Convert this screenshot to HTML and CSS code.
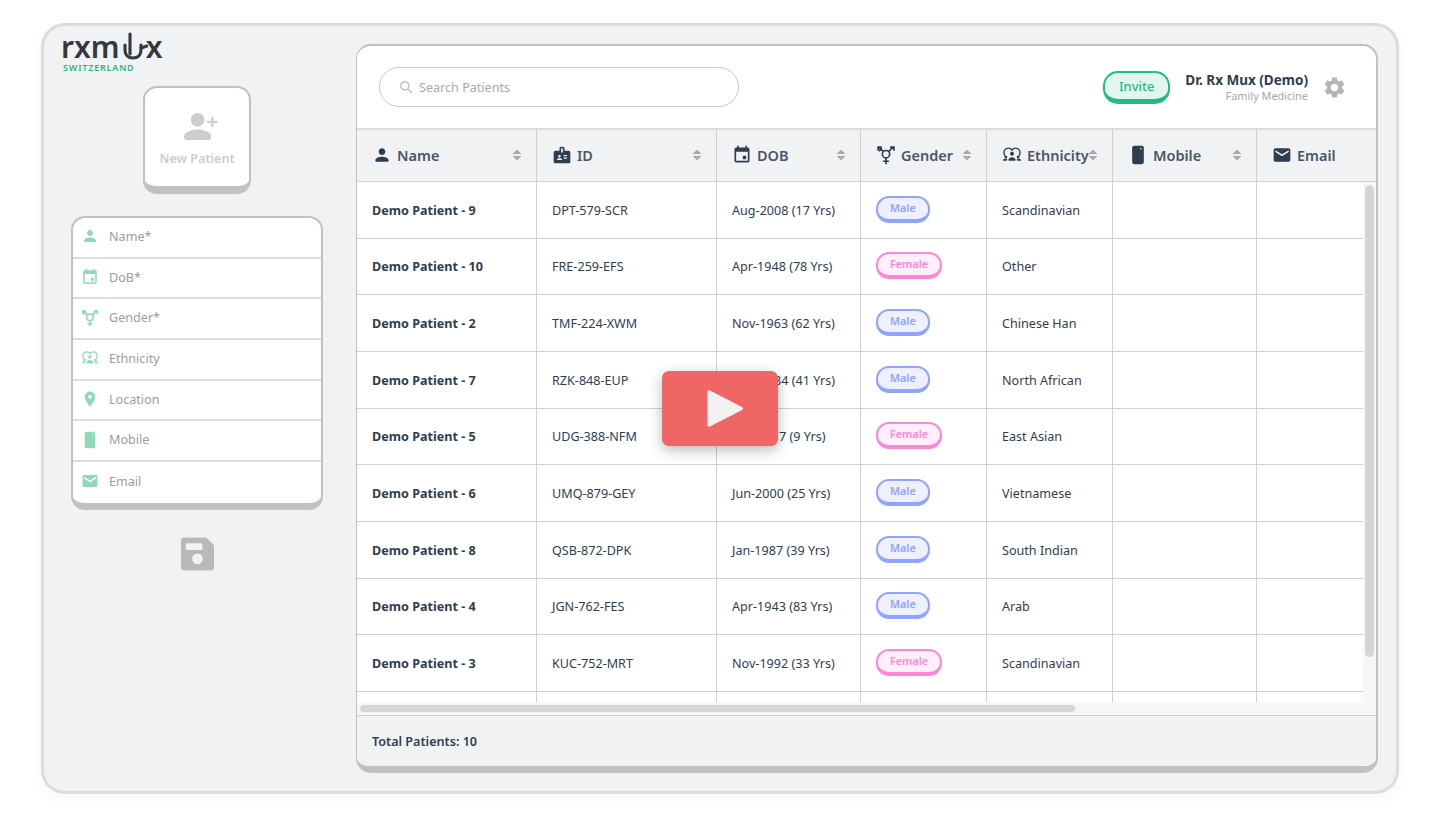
FILE: index.html
```html
<!DOCTYPE html>
<html lang="en">
<head>
  <meta charset="UTF-8">
  <meta name="viewport" content="width=device-width, initial-scale=1.0">
  <title>rxmux patients</title>
  <link rel="stylesheet" href="styles.css">
</head>
<body>
  <svg class="icon-defs" xmlns="http://www.w3.org/2000/svg">
    <symbol id="i-person" viewBox="0 0 24 24"><path d="M12 12c2.210 0 4-1.790 4-4s-1.790-4-4-4-4 1.790-4 4 1.790 4 4 4zm0 2c-2.670 0-8 1.340-8 4v1c0 .6.4 1 1 1h14c.6 0 1-.4 1-1v-1c0-2.660-5.330-4-8-4z"/></symbol>
    <symbol id="i-badge" viewBox="0 0 24 24"><path d="M20 7h-5V4c0-1.100-.9-2-2-2h-2c-1.100 0-2 .9-2 2v3H4c-1.100 0-2 .9-2 2v11c0 1.100.9 2 2 2h16c1.100 0 2-.9 2-2V9c0-1.100-.9-2-2-2zM9 12c.83 0 1.500.67 1.500 1.500S9.830 15 9 15s-1.500-.67-1.500-1.500S8.170 12 9 12zm3 6H6v-.75c0-1 2-1.500 3-1.500s3 .5 3 1.500V18zm1-9h-2V4h2v5zm5 7.500h-4V15h4v1.500zm0-3h-4V12h4v1.500z"/></symbol>
    <symbol id="i-event" viewBox="0 0 24 24"><path d="M17 13h-4v4h4v-4zM16 1v2H8V1H6v2H5c-1.110 0-1.990.9-1.990 2L3 19c0 1.100.89 2 2 2h14c1.100 0 2-.9 2-2V5c0-1.100-.9-2-2-2h-1V1h-2zm3 18H5V8h14v11z"/></symbol>
    <symbol id="i-gender" viewBox="0 0 24 24">
      <g fill="none" stroke="currentColor" stroke-width="2">
        <circle cx="12" cy="11" r="4.400"/>
        <path d="M12 15.400V23M8.500 19.500h7M8.800 7.800 3.500 2.500M15.200 7.800l5.300-5.300M2.500 7V2.500H7M17 2.500h4.500V7M3.500 7.500 7 4"/>
      </g>
    </symbol>
    <symbol id="i-ethnicity" viewBox="0 0 24 24">
      <path fill="none" stroke="currentColor" stroke-width="1.600" d="M3.600 13C.6 8 3.500 3.800 7.500 3.800c2 0 3.600 1 4.500 2.400.9-1.400 2.500-2.400 4.500-2.400 4 0 6.900 4.200 3.900 9.200"/>
      <circle cx="12" cy="10.500" r="2.300"/>
      <path d="M7.800 19v-1.500c0-1.800 2.200-2.900 4.200-2.900s4.200 1.100 4.200 2.900V19z"/>
      <circle cx="4.600" cy="14.500" r="1.700"/>
      <circle cx="19.400" cy="14.500" r="1.700"/>
      <path d="M1 19v-.6c0-1 1.500-1.800 3.500-1.800.8 0 1.400.1 1.900.3-.3.400-.5.900-.5 1.500v.6zM23 19v-.6c0-1-1.500-1.800-3.500-1.800-.8 0-1.400.1-1.900.3.300.400.500.900.500 1.500v.6z"/>
    </symbol>
    <symbol id="i-pin" viewBox="0 0 24 24"><path d="M12 2C8.130 2 5 5.130 5 9c0 5.250 7 13 7 13s7-7.750 7-13c0-3.870-3.130-7-7-7zm0 9.500c-1.380 0-2.500-1.120-2.500-2.500s1.120-2.500 2.500-2.500 2.500 1.120 2.500 2.500-1.120 2.500-2.500 2.500z"/></symbol>
    <symbol id="i-mobile" viewBox="0 0 24 24"><path fill-rule="evenodd" d="M7.500 1h9c1.400 0 2.500 1.100 2.500 2.500v17c0 1.400-1.100 2.500-2.500 2.500h-9C6.100 23 5 21.900 5 20.500v-17C5 2.100 6.100 1 7.500 1zM15.500 3.500a1 1 0 1 0 0 2 1 1 0 0 0 0-2z"/></symbol>
    <symbol id="i-mail" viewBox="0 0 24 24"><path d="M20 4H4c-1.100 0-2 .9-2 2v12c0 1.100.9 2 2 2h16c1.100 0 2-.9 2-2V6c0-1.100-.9-2-2-2zm0 4.500-8 5-8-5V6.200l8 5 8-5z"/></symbol>
    <symbol id="i-gear" viewBox="0 0 24 24"><path d="M19.140 12.940c.04-.3.06-.61.06-.94 0-.32-.02-.64-.07-.94l2.030-1.580c.18-.14.23-.41.12-.61l-1.920-3.320c-.12-.22-.37-.29-.59-.22l-2.390.96c-.5-.38-1.030-.7-1.620-.94l-.36-2.540c-.04-.24-.24-.41-.48-.41h-3.840c-.24 0-.43.17-.47.41l-.36 2.540c-.59.24-1.130.57-1.620.94l-2.390-.96c-.22-.08-.47 0-.59.22L2.740 8.870c-.12.21-.08.47.12.61l2.030 1.580c-.05.3-.09.63-.09.94s.02.64.07.94l-2.030 1.580c-.18.14-.23.41-.12.61l1.920 3.320c.12.22.37.29.59.22l2.390-.96c.5.38 1.030.7 1.620.94l.36 2.540c.05.24.24.41.48.41h3.840c.24 0 .44-.17.47-.41l.36-2.540c.59-.24 1.130-.56 1.620-.94l2.390.96c.22.08.47 0 .59-.22l1.920-3.320c.12-.22.07-.47-.12-.61l-2.010-1.580zM12 15.600c-1.980 0-3.600-1.620-3.600-3.600s1.620-3.600 3.600-3.600 3.600 1.620 3.600 3.600-1.620 3.600-3.600 3.600z"/></symbol>
  </svg>

  <div class="frame">
    <aside class="sidebar">
      <div class="logo">
        <div class="logo-word">
          <span>rxm</span>
          <svg class="logo-u" viewBox="0 0 28 30" stroke="currentColor" stroke-width="3.100" stroke-linecap="round">
            <path d="M5 13v5c0 5 3 8 8 8s8-3 8-8v-5"/>
            <path d="M10 2v20"/>
            <path d="M21 16l6-2"/>
          </svg>
          <span class="logo-x">x</span>
        </div>
        <div class="logo-sub">SWITZERLAND</div>
      </div>

      <button class="new-patient">
        <svg class="new-patient-icon" viewBox="0 0 36 30"><path d="M15 15c3.900 0 7-3.100 7-7s-3.100-7-7-7-7 3.100-7 7 3.100 7 7 7zm0 3c-5 0-14 2.500-14 7v1c0 1.700 1.300 3 3 3h22c1.700 0 3-1.300 3-3v-1c0-4.500-9-7-14-7zM29 9V5h2.500v4h4v2.500h-4v4H29v-4h-4V9z"/></svg>
        <span>New Patient</span>
      </button>

      <div class="form-card">
        <div class="field"><svg class="field-icon"><use href="#i-person"/></svg>Name*</div>
        <div class="field"><svg class="field-icon"><use href="#i-event"/></svg>DoB*</div>
        <div class="field"><svg class="field-icon"><use href="#i-gender"/></svg>Gender*</div>
        <div class="field"><svg class="field-icon"><use href="#i-ethnicity"/></svg>Ethnicity</div>
        <div class="field"><svg class="field-icon"><use href="#i-pin"/></svg>Location</div>
        <div class="field"><svg class="field-icon"><use href="#i-mobile"/></svg>Mobile</div>
        <div class="field"><svg class="field-icon"><use href="#i-mail"/></svg>Email</div>
      </div>

      <svg class="save-icon" viewBox="0 0 34 34"><path fill-rule="evenodd" d="M3 0h22c.6 0 1.100.2 1.500.6l6.900 6.900c.4.4.6.9.6 1.500v22c0 1.700-1.300 3-3 3H3c-1.700 0-3-1.300-3-3V3C0 1.300 1.300 0 3 0zm2 7v5c0 .6.400 1 1 1h15c.6 0 1-.4 1-1V7c0-.6-.4-1-1-1H6c-.6 0-1 .4-1 1zm12 9.500a5.500 5.500 0 1 0 0 11 5.500 5.500 0 0 0 0-11z"/></svg>
    </aside>

    <main class="panel">
      <header class="topbar">
        <div class="search">
          <svg class="search-icon" viewBox="0 0 24 24" stroke="currentColor" stroke-width="1.800"><circle cx="10" cy="10" r="7"/><path d="m15 15 7 7"/></svg>
          Search Patients
        </div>
        <div class="topbar-right">
          <button class="invite">Invite</button>
          <div class="doctor">
            <div class="doctor-name">Dr. Rx Mux (Demo)</div>
            <div class="doctor-spec">Family Medicine</div>
          </div>
          <svg class="gear"><use href="#i-gear"/></svg>
        </div>
      </header>

      <div class="table-head row">
        <div class="th"><svg class="th-icon"><use href="#i-person"/></svg>Name<span class="sort"></span></div>
        <div class="th"><svg class="th-icon"><use href="#i-badge"/></svg>ID<span class="sort"></span></div>
        <div class="th"><svg class="th-icon"><use href="#i-event"/></svg>DOB<span class="sort"></span></div>
        <div class="th"><svg class="th-icon"><use href="#i-gender"/></svg>Gender<span class="sort"></span></div>
        <div class="th"><svg class="th-icon"><use href="#i-ethnicity"/></svg>Ethnicity<span class="sort"></span></div>
        <div class="th"><svg class="th-icon"><use href="#i-mobile"/></svg>Mobile<span class="sort"></span></div>
        <div class="th"><svg class="th-icon"><use href="#i-mail"/></svg>Email<span class="sort"></span></div>
      </div>

      <div class="table-scroll">
        <div class="table-body">
          <div class="row"><div class="td name">Demo Patient - 9</div><div class="td">DPT-579-SCR</div><div class="td">Aug-2008 (17 Yrs)</div><div class="td"><span class="pill male">Male</span></div><div class="td">Scandinavian</div><div class="td"></div><div class="td"></div></div>
          <div class="row"><div class="td name">Demo Patient - 10</div><div class="td">FRE-259-EFS</div><div class="td">Apr-1948 (78 Yrs)</div><div class="td"><span class="pill female">Female</span></div><div class="td">Other</div><div class="td"></div><div class="td"></div></div>
          <div class="row"><div class="td name">Demo Patient - 2</div><div class="td">TMF-224-XWM</div><div class="td">Nov-1963 (62 Yrs)</div><div class="td"><span class="pill male">Male</span></div><div class="td">Chinese Han</div><div class="td"></div><div class="td"></div></div>
          <div class="row"><div class="td name">Demo Patient - 7</div><div class="td">RZK-848-EUP</div><div class="td">Aug-1984 (41 Yrs)</div><div class="td"><span class="pill male">Male</span></div><div class="td">North African</div><div class="td"></div><div class="td"></div></div>
          <div class="row"><div class="td name">Demo Patient - 5</div><div class="td">UDG-388-NFM</div><div class="td">Feb-2017 (9 Yrs)</div><div class="td"><span class="pill female">Female</span></div><div class="td">East Asian</div><div class="td"></div><div class="td"></div></div>
          <div class="row"><div class="td name">Demo Patient - 6</div><div class="td">UMQ-879-GEY</div><div class="td">Jun-2000 (25 Yrs)</div><div class="td"><span class="pill male">Male</span></div><div class="td">Vietnamese</div><div class="td"></div><div class="td"></div></div>
          <div class="row"><div class="td name">Demo Patient - 8</div><div class="td">QSB-872-DPK</div><div class="td">Jan-1987 (39 Yrs)</div><div class="td"><span class="pill male">Male</span></div><div class="td">South Indian</div><div class="td"></div><div class="td"></div></div>
          <div class="row"><div class="td name">Demo Patient - 4</div><div class="td">JGN-762-FES</div><div class="td">Apr-1943 (83 Yrs)</div><div class="td"><span class="pill male">Male</span></div><div class="td">Arab</div><div class="td"></div><div class="td"></div></div>
          <div class="row"><div class="td name">Demo Patient - 3</div><div class="td">KUC-752-MRT</div><div class="td">Nov-1992 (33 Yrs)</div><div class="td"><span class="pill female">Female</span></div><div class="td">Scandinavian</div><div class="td"></div><div class="td"></div></div>
          <div class="row"><div class="td"></div><div class="td"></div><div class="td"></div><div class="td"></div><div class="td"></div><div class="td"></div><div class="td"></div></div>
        </div>
        <div class="vtrack"><div class="vthumb"></div></div>
        <div class="htrack"><div class="hthumb"></div></div>
      </div>

      <footer class="panel-foot">Total Patients: 10</footer>
    </main>
  </div>

  <div class="play">
    <svg class="play-arrow" viewBox="0 0 38 40"><path d="M3 1.500 36 18.500c1.300.7 1.300 2.300 0 3L3 38.500c-1.300.6-2.500 0-2.500-1.500V3C.5 1.500 1.700.9 3 1.500z"/></svg>
  </div>
</body>
</html>
```

FILE: styles.css
```css
:root {
  --cols: 180px 180px 144px 126px 126px 144px 144px;
  --line: #cfd0d2;
  --edge: #c0c1c3;
  --ink: #2f3d50;
  --grey-bg: #f1f2f4;
}

* {
  box-sizing: border-box;
}

html, body {
  margin: 0;
  height: 815px;
  overflow: hidden;
}

body {
  font-family: "Noto Sans", sans-serif;
  font-size: 12.6px;
  color: var(--ink);
  background-color: #fff;
  position: relative;
}

.icon-defs {
  display: none;
}

svg {
  fill: currentColor;
  flex: none;
}

button {
  font-family: inherit;
  cursor: pointer;
  padding: 0;
}

.frame {
  display: flex;
  height: 771px;
  margin: 23px 41px 0;
  padding: 18px 18px 18px 0;
  background-color: var(--grey-bg);
  border: 3px solid #dcdcdc;
  border-radius: 24px;
  box-shadow: 0 4px 14px rgba(0, 0, 0, 0.04);
}

/* left column */
.sidebar {
  width: 312px;
  padding-right: 6px;
  display: flex;
  flex-direction: column;
  align-items: center;
  flex: none;
}

.logo {
  align-self: flex-start;
  margin: -12px 0 0 17px;
}

.logo-word {
  display: flex;
  align-items: flex-end;
  height: 30px;
  font-size: 30px;
  font-weight: 600;
  line-height: 30px;
  color: #33393e;
}

.logo-u {
  width: 28px;
  height: 30px;
  fill: none;
}

.logo-x {
  margin-left: -2px;
}

.logo-sub {
  margin-left: 2px;
  font-size: 9px;
  line-height: 12px;
  font-weight: 600;
  letter-spacing: 0.8px;
  color: #1fb57e;
}

.new-patient {
  width: 108px;
  height: 108px;
  margin-top: 12px;
  display: flex;
  flex-direction: column;
  align-items: center;
  background-color: #fff;
  border: 2px solid var(--edge);
  border-bottom-width: 8px;
  border-radius: 14px;
  color: #cdcdcd;
  font-size: 12.6px;
  font-weight: 600;
}

.new-patient-icon {
  width: 35px;
  height: 29px;
  margin: 24px 0 0 6px;
}

.new-patient span {
  margin-top: 9px;
  line-height: 18px;
}

.form-card {
  width: 252px;
  margin-top: 22px;
  background-color: #fff;
  border: 2px solid var(--edge);
  border-bottom-width: 7px;
  border-radius: 14px;
}

.field {
  height: 40.7px;
  display: flex;
  align-items: center;
  padding: 0 0 2px 8px;
  color: #9d9d9d;
  border-bottom: 2px solid #dcdcdc;
}

.field:last-child {
  border-bottom: none;
}

.field-icon {
  width: 18px;
  height: 18px;
  margin-right: 10px;
  color: #8dd9b9;
}

.save-icon {
  width: 33px;
  height: 34px;
  margin-top: 27px;
  color: #b9b9b9;
}

/* main panel */
.panel {
  flex: 1;
  min-width: 0;
  display: flex;
  flex-direction: column;
  background-color: #fff;
  border: 1px solid var(--edge);
  border-width: 2px 2px 7px 1px;
  border-radius: 15px;
  overflow: hidden;
}

.topbar {
  height: 82px;
  display: flex;
  align-items: center;
  justify-content: space-between;
  padding: 0 30px 0 22px;
  flex: none;
}

.search {
  width: 360px;
  height: 40px;
  display: flex;
  align-items: center;
  padding-left: 19px;
  border: 1px solid #c8c8c8;
  border-radius: 20px;
  color: #a8a8a8;
}

.search-icon {
  width: 14px;
  height: 14px;
  margin-right: 6px;
  fill: none;
}

.topbar-right {
  display: flex;
  align-items: center;
}

.invite {
  width: 67px;
  height: 33px;
  margin: 0 15px 0 0;
  background-color: #e2f6ee;
  border: 2px solid #1fbd85;
  border-bottom-width: 5px;
  border-radius: 15px;
  color: #1fbd85;
  font-size: 13px;
  font-weight: 500;
}

.doctor {
  text-align: right;
  margin-right: 14px;
}

.doctor-name {
  font-size: 13.5px;
  line-height: 17px;
  font-weight: 700;
}

.doctor-spec {
  font-size: 10.9px;
  line-height: 14px;
  color: #a8a8a8;
}

.gear {
  width: 25px;
  height: 25px;
  margin-right: -1px;
  color: #b5b5b5;
}

.row {
  display: grid;
  grid-template-columns: var(--cols);
  width: 1044px;
}

.table-head {
  height: 54px;
  flex: none;
  background-color: var(--grey-bg);
  border-top: 2px solid #dcdcdc;
  border-bottom: 1px solid var(--line);
}

.th {
  display: flex;
  align-items: center;
  padding: 0 0 2px 15px;
  border-right: 1px solid var(--line);
  font-size: 14.5px;
  font-weight: 600;
  color: #4a5668;
}

.th-icon {
  width: 20px;
  height: 20px;
  margin-right: 5px;
  color: #2f3d50;
}

.sort {
  margin-left: auto;
  margin-right: 15px;
  width: 8px;
  height: 12px;
  flex: none;
  background:
    linear-gradient(to bottom right, transparent 50%, #ababab 50%) left top / 4px 5px no-repeat,
    linear-gradient(to bottom left, transparent 50%, #ababab 50%) right top / 4px 5px no-repeat,
    linear-gradient(to top right, transparent 50%, #ababab 50%) left bottom / 4px 5px no-repeat,
    linear-gradient(to top left, transparent 50%, #ababab 50%) right bottom / 4px 5px no-repeat;
}

.table-scroll {
  flex: 1;
  min-height: 0;
  display: grid;
  grid-template-columns: 1fr 13px;
  grid-template-rows: 1fr 13px;
  background-color: #f7f7f8;
}

.table-body {
  overflow: hidden;
  background-color: #fff;
}

.table-body .row {
  height: 56.67px;
  border-bottom: 1px solid var(--line);
}

.td {
  display: flex;
  align-items: center;
  padding: 1px 0 0 15px;
  border-right: 1px solid var(--line);
}

.name {
  font-weight: 700;
}

.pill {
  height: 27px;
  padding: 0 12px 2px;
  margin-top: -2px;
  display: flex;
  align-items: center;
  border: 2px solid;
  border-bottom-width: 4px;
  border-radius: 13px;
  font-size: 10.8px;
  font-weight: 600;
}

.male {
  color: #8fa3ff;
  background-color: #eef0ff;
  border-color: #8fa3ff;
}

.female {
  color: #ff85d5;
  background-color: #ffeffa;
  border-color: #ff85d5;
}

.vtrack {
  padding: 3px 2px 0 2px;
}

.vthumb {
  height: 472px;
  border-radius: 5px;
  background-color: #d4d5d7;
}

.htrack {
  grid-column: 1 / 3;
  padding: 3px 0 0 3px;
}

.hthumb {
  width: 715px;
  height: 7px;
  border-radius: 4px;
  background-color: #d4d5d7;
}

.panel-foot {
  height: 51px;
  flex: none;
  display: flex;
  align-items: center;
  padding-left: 15px;
  background-color: var(--grey-bg);
  border-top: 1px solid var(--line);
  font-weight: 600;
}

/* video overlay */
.play {
  position: absolute;
  left: 662px;
  top: 371px;
  width: 116px;
  height: 75px;
  display: flex;
  align-items: center;
  justify-content: center;
  background-color: #f06666;
  border-radius: 7px;
  box-shadow: 0 4px 14px rgba(0, 0, 0, 0.28);
}

.play-arrow {
  width: 37px;
  height: 39px;
  margin-left: 11px;
  color: #f2f2f2;
}
```
